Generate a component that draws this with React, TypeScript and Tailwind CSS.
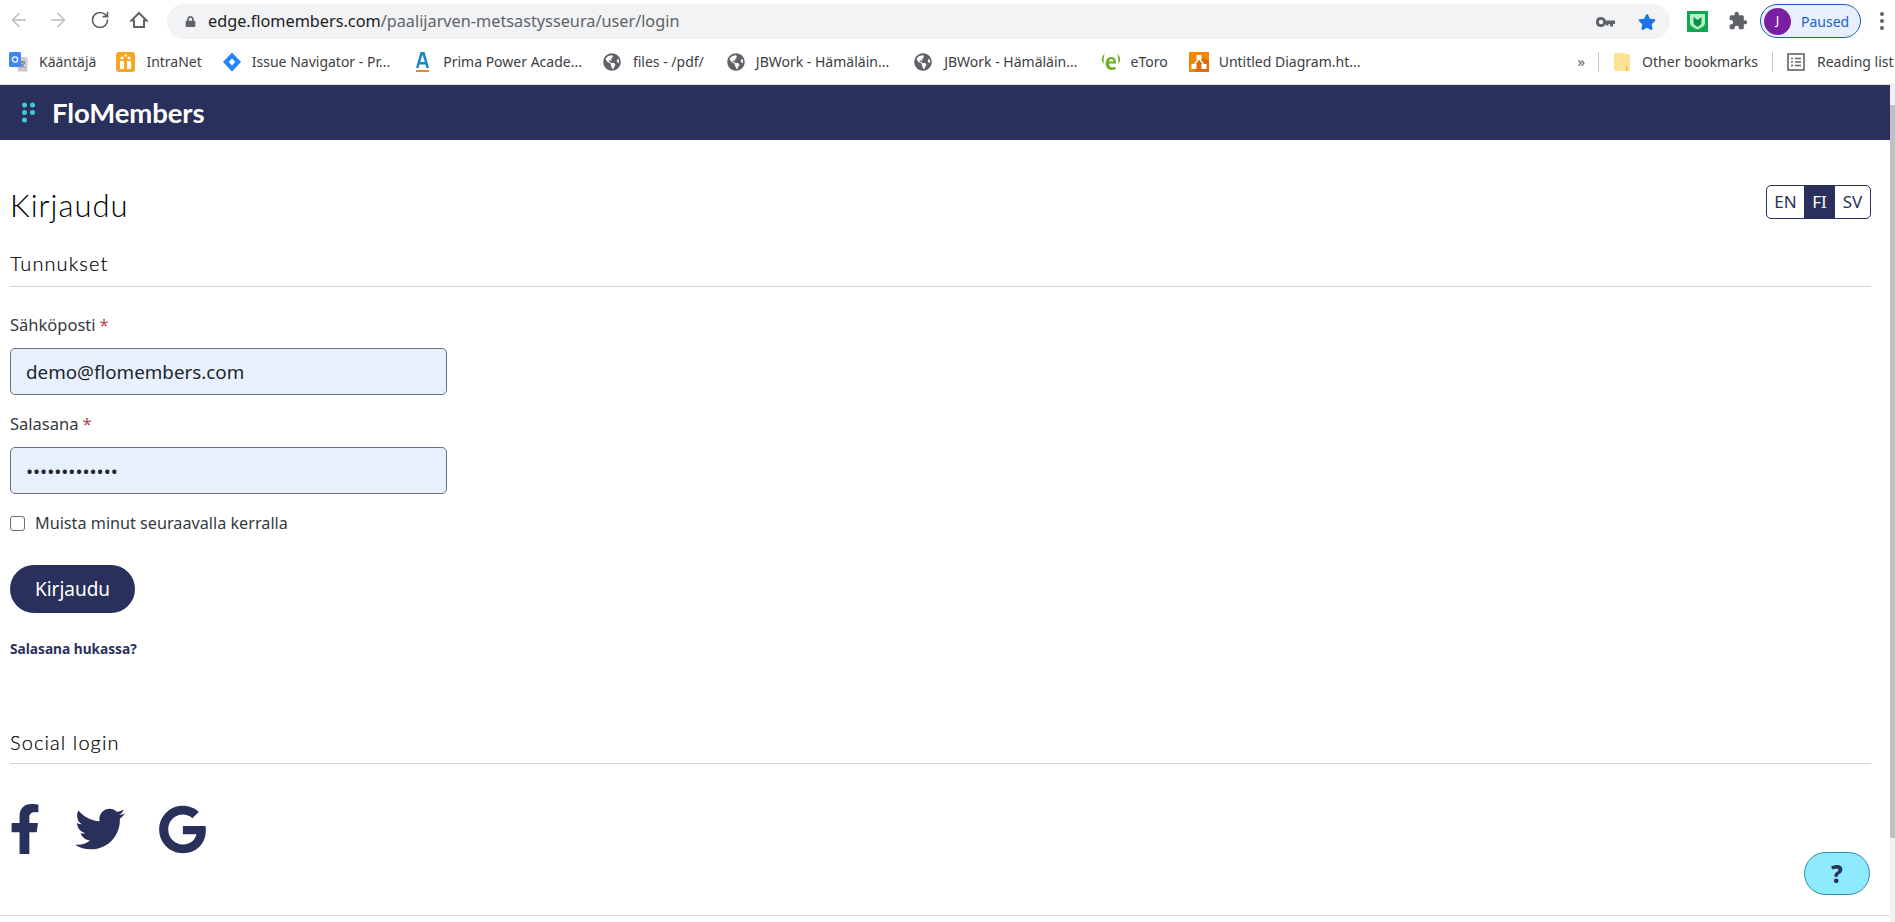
import React from "react";
import { ArrowLeft, ArrowRight, RotateCw } from "lucide-react";
import { FaFacebookF, FaTwitter, FaGoogle, FaGlobeAmericas, FaStar, FaLock } from "react-icons/fa";

const Globe = () => <FaGlobeAmericas className="text-[#5f6368]" size={18} />;

function Translate() {
  return (
    <svg width="19" height="20" viewBox="0 0 19 20">
      <path d="M7 5h10a1.500 1.500 0 0 1 1.500 1.500v12a1 1 0 0 1-1 1H9z" fill="#c9ccd1" />
      <path d="M11 10l5 0M13.500 9v1.500M15.500 10.500c-.7 2.500-2.500 4-4 5M12 11.500c.7 1.800 2 3.200 3.500 4" stroke="#5f6368" strokeWidth="1" fill="none" />
      <rect x="0" y="0" width="12" height="15" rx="1.500" fill="#4285f4" />
      <circle cx="6" cy="7.500" r="2.600" fill="none" stroke="#fff" strokeWidth="1.300" />
    </svg>
  );
}

function IntraNet() {
  return (
    <svg width="19" height="20" viewBox="0 0 19 20">
      <rect width="19" height="20" rx="3" fill="#f6a623" />
      <rect x="4" y="9" width="4" height="8" fill="#fff" />
      <rect x="11" y="9" width="4" height="8" fill="#fff" />
      <circle cx="6" cy="6" r="1.500" fill="#fff" />
      <circle cx="13" cy="6" r="1.500" fill="#fff" />
      <circle cx="9.500" cy="3.500" r="1.200" fill="#fff" />
    </svg>
  );
}

function Diamond() {
  return (
    <svg width="18" height="20" viewBox="0 0 18 20">
      <path d="M9 0.500 18 10 9 19.500 0 10z" fill="#2684ff" />
      <path d="M9 6.500 12.300 10 9 13.500 5.700 10z" fill="#fff" />
    </svg>
  );
}

function Prima() {
  return (
    <svg width="15" height="22" viewBox="0 0 15 22">
      <path d="M5.500 1h4L14 17h-2.500l-1-3.500h-6L3.500 17H1zM5.200 11h4.600L7.500 3.800z" fill="#1687c9" />
      <rect x="1" y="19" width="13" height="2" fill="#e8833a" />
    </svg>
  );
}

function EToro() {
  return (
    <svg width="20" height="24" viewBox="0 0 20 24">
      <path d="M4 3C.5 7-.5 10 3 14c-.6-4-.5-7 1-11zM16 3c3.500 4 4.500 7 1 11 .6-4 .5-7-1-11z" fill="#6ab023" />
      <path fillRule="evenodd" d="M10.200 7c3.200 0 5 2.600 5 6.500H8c.2 2.500 1.500 4 3.300 4 1 0 2-.3 2.900-.9l.6 2.200c-1.100.8-2.500 1.200-4 1.200-3.700 0-6.100-2.600-6.100-6.500C4.700 9.700 7 7 10.200 7zM8 11.500h4.600c-.1-1.600-1-2.600-2.300-2.600S8.200 9.900 8 11.500z" fill="#6ab023" />
    </svg>
  );
}

function Drawio() {
  return (
    <svg width="20" height="20" viewBox="0 0 20 20">
      <rect width="20" height="20" fill="#f08705" />
      <path d="M20 8v12H7L5 17l5-9 3-2z" fill="#df6c0c" />
      <rect x="7.500" y="3" width="5" height="5" rx=".5" fill="#fff" />
      <rect x="2.500" y="12" width="5" height="5" rx=".5" fill="#fff" />
      <rect x="12.500" y="12" width="5" height="5" rx=".5" fill="#fff" />
      <path d="M9 8 5.500 12M11 8l3.500 4" stroke="#fff" strokeWidth="1.300" />
    </svg>
  );
}

function Key() {
  return (
    <svg width="19" height="10" viewBox="0 0 19 10">
      <path d="M5 0a5 5 0 0 1 4.800 3.500H19V7h-2v2.500h-3V7h-1.500v1.500h-2.800V6.500A5 5 0 1 1 5 0zm0 2.800a2.200 2.200 0 1 0 0 4.400 2.200 2.200 0 0 0 0-4.400z" fill="#5f6368" />
    </svg>
  );
}

function Shield() {
  return (
    <svg width="21" height="21" viewBox="0 0 21 21">
      <rect width="21" height="21" fill="#0fa84e" />
      <path d="M3 3h15v9c0 3-4 5-7.500 6.500C7 17 3 15 3 12z" fill="#b6f0c8" />
      <path d="M6.500 6l4 3 4-3v6c0 1.500-2 2.800-4 3.800-2-1-4-2.300-4-3.800z" fill="#0b8f42" />
    </svg>
  );
}

function Puzzle() {
  return (
    <svg width="20" height="20" viewBox="0 0 24 24" fill="#5f6368">
      <path d="M20.500 11H19V7c0-1.100-.9-2-2-2h-4V3.500C13 2.120 11.880 1 10.500 1S8 2.120 8 3.500V5H4c-1.100 0-1.990.9-1.990 2v3.800H3.500c1.490 0 2.700 1.210 2.700 2.700s-1.210 2.700-2.700 2.700H2V20c0 1.100.9 2 2 2h3.800v-1.500c0-1.490 1.210-2.700 2.700-2.700 1.490 0 2.700 1.210 2.700 2.700V22H17c1.100 0 2-.9 2-2v-4h1.500c1.380 0 2.500-1.120 2.500-2.500S21.880 11 20.500 11z" />
    </svg>
  );
}

function HomeIcon() {
  return (
    <svg width="20" height="20" viewBox="0 0 20 20" fill="none" stroke="#5f6368" strokeWidth="2" strokeLinejoin="miter">
      <path d="M10 3 2.500 10.500H5v6.500h10v-6.500h2.500z" />
    </svg>
  );
}

function ReadingList() {
  return (
    <svg width="18" height="18" viewBox="0 0 18 18" fill="none" stroke="#5f6368" strokeWidth="1.600">
      <rect x="1" y="1" width="16" height="16" />
      <path d="M4 5.500h2M8 5.500h6M4 9h2M8 9h6M4 12.500h2M8 12.500h6" />
    </svg>
  );
}

function Folder() {
  return (
    <svg width="16" height="18" viewBox="0 0 16 18">
      <path d="M1 0h10l1 1h3a1 1 0 0 1 1 1v15a1 1 0 0 1-1 1H2a2 2 0 0 1-2-2V1a1 1 0 0 1 1-1z" fill="#fde293" />
      <rect x="12" y="13" width="2" height="5" fill="#f2c94c" />
    </svg>
  );
}

function Bookmark({ icon, text, gap }: { icon: React.ReactNode; text: string; gap: string }) {
  return (
    <div className={`flex items-center ${gap}`}>
      {icon}
      <span className="whitespace-nowrap">{text}</span>
    </div>
  );
}

function BrowserChrome() {
  return (
    <header className="font-['Noto_Sans',sans-serif] shrink-0 bg-white">
      <div className="flex h-[39px] items-center pl-[8px]">
        <ArrowLeft size={22} strokeWidth={1.6} className="text-[#babcbe]" />
        <ArrowRight size={22} strokeWidth={1.6} className="ml-[17px] text-[#babcbe]" />
        <RotateCw size={20} strokeWidth={2} className="ml-[21px] text-[#5f6368]" />
        <div className="ml-[19px]"><HomeIcon /></div>
        <div className="ml-[18px] mt-[4px] flex h-[35px] w-[1503px] items-center rounded-full bg-[#f1f3f4] pl-[18px] pr-[14px]">
          <FaLock size={11} className="text-[#5f6368]" />
          <span className="ml-[12px] text-[16.250px] text-[#202124]">edge.flomembers.com</span>
          <span className="text-[16.250px] text-[#5f6368]">/paalijarven-metsastysseura/user/login</span>
          <div className="ml-auto flex items-center gap-[23px]">
            <Key />
            <FaStar size={18} className="text-[#1a73e8]" />
          </div>
        </div>
        <div className="ml-[17px] mt-[3px] flex items-center">
          <Shield />
          <div className="ml-[20px]"><Puzzle /></div>
          <div className="ml-[12px] flex h-[34px] w-[101px] items-center rounded-full border border-[#1a5fb4] bg-[#e8f0fe] pl-[3px]">
            <span className="flex h-[27px] w-[27px] items-center justify-center rounded-full bg-[#7b1fa2] text-[13px] text-white">J</span>
            <span className="ml-[10px] text-[14px] text-[#1a62c4]">Paused</span>
          </div>
          <div className="ml-[19px] flex flex-col gap-[3px]">
            <span className="h-[4px] w-[4px] rounded-full bg-[#5f6368]" />
            <span className="h-[4px] w-[4px] rounded-full bg-[#5f6368]" />
            <span className="h-[4px] w-[4px] rounded-full bg-[#5f6368]" />
          </div>
        </div>
      </div>
      <div className="flex h-[46px] items-center border-b border-[#e3e3e3] pl-[9px] text-[14px] text-[#3c4043]">
        <Bookmark icon={<Translate />} text="Kääntäjä" gap="gap-[11px]" />
        <div className="ml-[20px]"><Bookmark icon={<IntraNet />} text="IntraNet" gap="gap-[11px]" /></div>
        <div className="ml-[21px]"><Bookmark icon={<Diamond />} text="Issue Navigator - Pr..." gap="gap-[11px]" /></div>
        <div className="ml-[25px]"><Bookmark icon={<Prima />} text="Prima Power Acade..." gap="gap-[13px]" /></div>
        <div className="ml-[21px]"><Bookmark icon={<Globe />} text="files - /pdf/" gap="gap-[12px]" /></div>
        <div className="ml-[23px]"><Bookmark icon={<Globe />} text="JBWork - Hämäläin..." gap="gap-[11px]" /></div>
        <div className="ml-[25px]"><Bookmark icon={<Globe />} text="JBWork - Hämäläin..." gap="gap-[12px]" /></div>
        <div className="ml-[23px]"><Bookmark icon={<EToro />} text="eToro" gap="gap-[10px]" /></div>
        <div className="ml-[21px]"><Bookmark icon={<Drawio />} text="Untitled Diagram.ht..." gap="gap-[10px]" /></div>
        <div className="ml-auto flex items-center">
          <span className="text-[15px] text-[#5f6368]">»</span>
          <span className="ml-[13px] h-[20px] w-px bg-[#c8c8c8]" />
          <div className="ml-[15px]"><Bookmark icon={<Folder />} text="Other bookmarks" gap="gap-[12px]" /></div>
          <span className="ml-[14px] h-[20px] w-px bg-[#c8c8c8]" />
          <div className="ml-[14px] w-[108px]"><Bookmark icon={<ReadingList />} text="Reading list" gap="gap-[12px]" /></div>
        </div>
      </div>
    </header>
  );
}

function FieldLabel({ text }: { text: string }) {
  return (
    <label className="flex gap-[4px] text-[16.500px] leading-[24px] text-[#343a40]">
      <span>{text}</span>
      <span className="text-[#b5404f]">*</span>
    </label>
  );
}

function Input({ value }: { value: string }) {
  return (
    <div className="mt-[11px] flex h-[47px] w-[437px] items-center rounded-[5px] border border-[#6b7080] bg-[#e8f0fe] pl-[15px] pt-[2px] text-[18.800px] text-[#212529]">
      {value}
    </div>
  );
}

function Section({ title, pad }: { title: string; pad: string }) {
  return (
    <div className={`border-b border-[#d3d5d9] ${pad} font-['Lato',sans-serif] text-[20px] font-light leading-[28px] tracking-[1.1px] text-black [-webkit-text-stroke:0.2px_#000]`}>
      {title}
    </div>
  );
}

export default function App() {
  return (
    <div className="relative flex h-[922px] w-[1895px] flex-col overflow-hidden bg-white font-['Noto_Sans',sans-serif]">
      <BrowserChrome />
      <div className="flex min-h-0 flex-1">
        <main className="flex min-w-0 flex-1 flex-col">
          <div className="flex h-[55px] shrink-0 items-center bg-[#2a305c] pl-[22px]">
            <svg width="14" height="21" viewBox="0 0 14 21">
              <circle cx="2.500" cy="3" r="2.500" fill="#3fc8dc" />
              <circle cx="10.500" cy="3" r="2.500" fill="#3fc8dc" />
              <circle cx="2.500" cy="10.500" r="2.500" fill="#3fc8dc" />
              <circle cx="10.500" cy="10.500" r="2.500" fill="#3fc8dc" />
              <circle cx="2.500" cy="18" r="2.500" fill="#3fc8dc" />
            </svg>
            <span className="ml-[16px] mt-[1px] font-['Lato',sans-serif] text-[27.500px] font-bold tracking-[-0.1px] text-white">FloMembers</span>
          </div>
          <div className="flex-1 pl-[10px] pr-[19px]">
            <div className="mt-[45px] flex items-start justify-between">
              <h1 className="font-['Lato',sans-serif] text-[31px] font-light leading-[40px] tracking-[1px] text-black">Kirjaudu</h1>
              <div className="flex h-[34px] w-[105px] overflow-hidden rounded-[5px] border border-[#2a305c] text-[17px] text-[#2a305c]">
                <span className="flex w-[37px] items-center justify-center">EN</span>
                <span className="flex w-[31px] items-center justify-center bg-[#2a305c] text-white">FI</span>
                <span className="flex flex-1 items-center justify-center">SV</span>
              </div>
            </div>
            <div className="mt-[24px]"><Section title="Tunnukset" pad="pb-[9px]" /></div>
            <div className="mt-[26px]"><FieldLabel text="Sähköposti" /></div>
            <Input value="demo@flomembers.com" />
            <div className="mt-[17px]"><FieldLabel text="Salasana" /></div>
            <Input value="•••••••••••••" />
            <label className="mt-[17px] flex items-center text-[16.200px] leading-[24px] text-[#343a40]">
              <span className="h-[15px] w-[15px] rounded-[3px] border border-[#6f6f6f] bg-white" />
              <span className="ml-[10px]">Muista minut seuraavalla kerralla</span>
            </label>
            <button className="mt-[30px] flex h-[48px] w-[125px] items-center justify-center rounded-full bg-[#2a305c] pt-[1px] text-[19px] text-white">
              Kirjaudu
            </button>
            <a className="mt-[26px] block text-[13.700px] font-bold leading-[20px] text-[#2a305c]">Salasana hukassa?</a>
            <div className="mt-[69px]"><Section title="Social login" pad="pb-[7px]" /></div>
            <div className="mt-[40px] flex items-center text-[#2a305c]">
              <FaFacebookF size={50} className="ml-[-10px]" />
              <FaTwitter size={50} className="ml-[25px]" />
              <FaGoogle size={49} className="ml-[33px]" />
            </div>
          </div>
          <div className="mb-[6px] h-px shrink-0 bg-[#d8d8d8]" />
        </main>
        <aside className="flex w-[5px] shrink-0 flex-col bg-[#f1f1f1]">
          <div className="mt-[20px] h-[733px] bg-[#c1c1c1]" />
        </aside>
      </div>
      <button className="absolute left-[1804px] top-[852px] flex h-[43px] w-[66px] items-center justify-center rounded-full border border-[#2a8ca8] bg-[#8eeaff] text-[24px] font-extrabold leading-none text-[#2a305c]">
        ?
      </button>
    </div>
  );
}
